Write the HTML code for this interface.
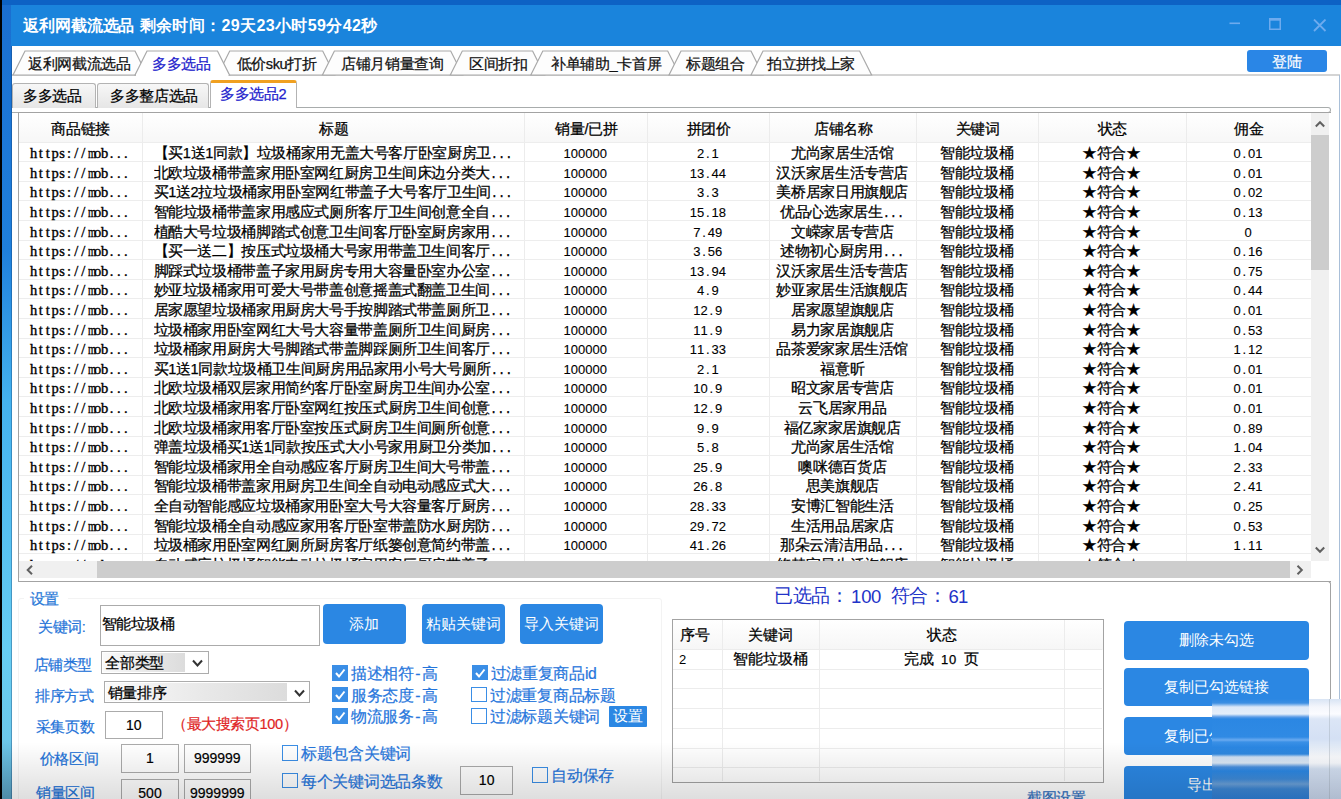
<!DOCTYPE html>
<html><head><meta charset="utf-8">
<style>
*{margin:0;padding:0;box-sizing:border-box}
html,body{width:1341px;height:799px;overflow:hidden;background:#fff;font-family:"Liberation Sans",sans-serif;color:#000}
.abs{position:absolute}
#frameL{position:absolute;left:0;top:0;width:2px;height:799px;background:#000}
#frameB{position:absolute;left:2px;top:0;width:9.5px;height:799px;background:linear-gradient(#1a6ed0 0px,#1f80dc 250px,#44b2ee 400px,#66cdf2 650px,#6cc8ea 740px,#5aa0c0 799px)}
#frameEdge{position:absolute;left:10.5px;top:46px;width:1.2px;height:753px;background:rgba(20,60,110,.35)}
#topband{position:absolute;left:2px;top:0;width:1339px;height:5px;background:#0d62c4}
#title{position:absolute;left:10.5px;top:5px;width:1331px;height:41px;background:#1a84dc}
#title .t{position:absolute;left:12.5px;top:11px;font-size:16px;font-weight:bold;color:#fff;white-space:nowrap;letter-spacing:-0.1px}
#rborder{position:absolute;left:1339px;top:75px;width:1.3px;height:724px;background:#a9bfd8}
.tabsvg{position:absolute;left:0;top:0}
.tt{position:absolute;top:54px;font-weight:500;-webkit-text-stroke:0.25px currentColor;letter-spacing:-0.37px;font-size:14.6px;white-space:nowrap;line-height:20px;color:#111}
.tt.sel{color:#2222cc}
#login{position:absolute;left:1247px;top:50px;width:80px;height:22px;background:#2a86e6;border-radius:3px;color:#fff;font-size:14.6px;text-align:center;line-height:24.5px;font-weight:500;-webkit-text-stroke:0.2px #fff}
.st{position:absolute;top:82.5px;height:25px;border:1px solid #b3b3b3;border-bottom:none;border-radius:3px 3px 0 0;background:linear-gradient(#f7f7f7,#e6e6e6);font-size:14.6px;font-weight:500;-webkit-text-stroke:0.25px currentColor;letter-spacing:-0.37px;line-height:24px;white-space:nowrap}
#st3{top:79.5px;height:28.5px;background:#fff;border-top:3px solid #f0a020;color:#2222cc;line-height:22px}
#tabline{position:absolute;left:12px;top:106.6px;width:1318.6px;height:6.4px;border:1.3px solid #a8acac;border-left:none;border-radius:0 3px 3px 0}
#tlcover{position:absolute;left:211px;top:105px;width:85px;height:2.5px;background:#fff}
#rvl{position:absolute;left:1290px;top:580.6px;width:40.6px;height:240px;border:1.4px solid #a3a3a3;border-left:none;border-bottom:none;border-radius:0 3px 0 0}
#lv{position:absolute;left:18px;top:111.5px;width:1312.5px;height:470.5px;border:1.5px solid #a3a3a3;border-right:none;background:#fff;overflow:hidden}
#lvin{position:absolute;left:-19.5px;top:-113px;width:1341px;height:799px}
.hdr{position:absolute;left:18px;top:113px;width:1293px;height:29px;background:linear-gradient(#ffffff,#f7f7f7)}
.h{position:absolute;top:119px;margin-left:1px;font-size:14.6px;letter-spacing:-0.37px;font-weight:500;-webkit-text-stroke:0.25px currentColor;text-align:center;line-height:20px;white-space:nowrap}
.vl{position:absolute;top:113px;width:1px;height:448px;background:#ececec}
.hl{position:absolute;left:18px;width:1293px;height:1px;background:#ededed}
.row{position:absolute;left:0;width:1341px;height:19.6px}
.c{position:absolute;top:1.8px;font-weight:500;-webkit-text-stroke:0.25px currentColor;font-size:14.6px;letter-spacing:-0.37px;line-height:19.6px;white-space:nowrap;overflow:hidden}
.mono{font-family:"Liberation Serif",serif;font-size:14.5px;font-weight:normal;letter-spacing:0;-webkit-text-stroke:0.35px #000}
.mono i{display:inline-block;width:7.1px;text-align:center;font-style:normal}
.mono i.m{transform:scaleX(0.72)}
.num i{display:inline-block;width:7.25px;text-align:center;font-style:normal;letter-spacing:0}
.num{font-family:"Liberation Sans",sans-serif;font-size:13px;letter-spacing:-0.1px;font-weight:normal;-webkit-text-stroke:0.1px #000}
.dots{font-family:"Liberation Mono",monospace;font-size:12px;letter-spacing:0px;font-weight:normal;-webkit-text-stroke:0.3px #000}
#vsb{position:absolute;left:1311.2px;top:113px;width:18px;height:448px;background:#f0f0f0}
#vthumb{position:absolute;left:1311.2px;top:135px;width:18px;height:135px;background:#cdcdcd}
#hsb{position:absolute;left:18px;top:561.2px;width:1293px;height:17.6px;background:#f0f0f0}
#hthumb{position:absolute;left:97px;top:561.2px;width:1193.3px;height:17.6px;background:#cdcdcd}
#corner{position:absolute;left:1311px;top:561px;width:18px;height:18px;background:#fff}
</style></head><body>
<div id="frameL"></div><div id="frameB"></div>
<div id="topband"></div>
<div id="title"><span class="t">返利网截流选品<span style="letter-spacing:0.37px;margin-left:5.4px">剩余时间：29天23小时59分42秒</span></span>
<svg class="abs" style="left:1218px;top:13px" width="20" height="20"><rect x="0.5" y="4.5" width="10.5" height="1.6" fill="#6eabee"/></svg>
<svg class="abs" style="left:1258px;top:13px" width="20" height="20"><rect x="0.75" y="0.75" width="10.5" height="10.5" fill="none" stroke="#6eabee" stroke-width="1.5"/><rect x="0.75" y="0.5" width="10.5" height="2.2" fill="#6eabee"/></svg>
<svg class="abs" style="left:1302px;top:14px" width="20" height="20"><path d="M1 0.5 L12.5 12 M12.5 0.5 L1 12" stroke="#6eabee" stroke-width="1.8"/></svg>
</div>
<div id="frameEdge"></div>
<svg class="tabsvg" width="1341" height="80" viewBox="0 0 1341 80"><line x1="12" y1="75" x2="1340" y2="75" stroke="#a9a9a9" stroke-width="1.2"/><polygon points="13,75 25,51 135,51 147,75" fill="#fdfdfd" stroke="#a9a9a9" stroke-width="1.2"/><polygon points="217.7,75 229.7,51 322.7,51 334.7,75" fill="#fdfdfd" stroke="#a9a9a9" stroke-width="1.2"/><polygon points="322.4,75 334.4,51 450.7,51 462.7,75" fill="#fdfdfd" stroke="#a9a9a9" stroke-width="1.2"/><polygon points="450.3,75 462.3,51 532.6,51 544.6,75" fill="#fdfdfd" stroke="#a9a9a9" stroke-width="1.2"/><polygon points="530.8,75 542.8,51 667.7,51 679.7,75" fill="#fdfdfd" stroke="#a9a9a9" stroke-width="1.2"/><polygon points="669,75 681,51 751,51 763,75" fill="#fdfdfd" stroke="#a9a9a9" stroke-width="1.2"/><polygon points="751,75 763,51 859.6,51 871.6,75" fill="#fdfdfd" stroke="#a9a9a9" stroke-width="1.2"/><polygon points="135,75 147,51 217.5,51 229.5,75" fill="#ffffff" stroke="#a9a9a9" stroke-width="1.2"/><rect x="136" y="74" width="92.5" height="2.5" fill="#ffffff"/></svg>
<span class="tt" style="left:28px">返利网截流选品</span><span class="tt sel" style="left:152px">多多选品</span><span class="tt" style="left:236.5px">低价sku打折</span><span class="tt" style="left:341px">店铺月销量查询</span><span class="tt" style="left:469px">区间折扣</span><span class="tt" style="left:551px">补单辅助_卡首屏</span><span class="tt" style="left:686px">标题组合</span><span class="tt" style="left:767px">拍立拼找上家</span>
<div id="login">登陆</div>
<div id="tabline"></div>
<div class="st" style="left:12px;width:83.5px;padding-left:10px">多多选品</div>
<div class="st" style="left:97px;width:112px;padding-left:12px">多多整店选品</div>
<div class="st" id="st3" style="left:210px;width:86.5px;padding-left:9px">多多选品2</div>
<div id="rborder"></div>
<div id="lv"><div id="lvin">
<div class="hdr"></div>
<div class="vl" style="left:142.5px"></div><div class="vl" style="left:524px"></div><div class="vl" style="left:647.5px"></div><div class="vl" style="left:769px"></div><div class="vl" style="left:916.5px"></div><div class="vl" style="left:1038px"></div><div class="vl" style="left:1186px"></div>
<span class="h" style="left:18px;width:124.5px">商品链接</span><span class="h" style="left:142.5px;width:381.5px">标题</span><span class="h" style="left:524px;width:123.5px">销量/已拼</span><span class="h" style="left:647.5px;width:121.5px">拼团价</span><span class="h" style="left:769px;width:147.5px">店铺名称</span><span class="h" style="left:916.5px;width:121.5px">关键词</span><span class="h" style="left:1038px;width:148px">状态</span><span class="h" style="left:1186px;width:125px">佣金</span>
<div class="hl" style="top:142.00px"></div><div class="hl" style="top:161.60px"></div><div class="hl" style="top:181.20px"></div><div class="hl" style="top:200.80px"></div><div class="hl" style="top:220.40px"></div><div class="hl" style="top:240.00px"></div><div class="hl" style="top:259.60px"></div><div class="hl" style="top:279.20px"></div><div class="hl" style="top:298.80px"></div><div class="hl" style="top:318.40px"></div><div class="hl" style="top:338.00px"></div><div class="hl" style="top:357.60px"></div><div class="hl" style="top:377.20px"></div><div class="hl" style="top:396.80px"></div><div class="hl" style="top:416.40px"></div><div class="hl" style="top:436.00px"></div><div class="hl" style="top:455.60px"></div><div class="hl" style="top:475.20px"></div><div class="hl" style="top:494.80px"></div><div class="hl" style="top:514.40px"></div><div class="hl" style="top:534.00px"></div><div class="hl" style="top:553.60px"></div>
<div class="row" style="top:143.00px"><span class="c mono" style="left:18px;width:124.5px;text-align:center"><i>h</i><i>t</i><i>t</i><i>p</i><i>s</i><i>:</i><i>/</i><i>/</i><i class="m">m</i><i>o</i><i>b</i><i>.</i><i>.</i><i>.</i></span><span class="c" style="left:154px;width:370px">【买1送1同款】垃圾桶家用无盖大号客厅卧室厨房卫<span class="dots">...</span></span><span class="c num" style="left:524px;width:123.5px;text-align:center"><i>1</i><i>0</i><i>0</i><i>0</i><i>0</i><i>0</i></span><span class="c num" style="left:647.5px;width:121.5px;text-align:center"><i>2</i><i>.</i><i>1</i></span><span class="c" style="left:769px;width:147.5px;text-align:center">尤尚家居生活馆</span><span class="c" style="left:916.5px;width:121.5px;text-align:center">智能垃圾桶</span><span class="c" style="left:1038px;width:148px;text-align:center">★符合★</span><span class="c num" style="left:1186px;width:125px;text-align:center"><i>0</i><i>.</i><i>0</i><i>1</i></span></div><div class="row" style="top:162.60px"><span class="c mono" style="left:18px;width:124.5px;text-align:center"><i>h</i><i>t</i><i>t</i><i>p</i><i>s</i><i>:</i><i>/</i><i>/</i><i class="m">m</i><i>o</i><i>b</i><i>.</i><i>.</i><i>.</i></span><span class="c" style="left:154px;width:370px">北欧垃圾桶带盖家用卧室网红厨房卫生间床边分类大<span class="dots">...</span></span><span class="c num" style="left:524px;width:123.5px;text-align:center"><i>1</i><i>0</i><i>0</i><i>0</i><i>0</i><i>0</i></span><span class="c num" style="left:647.5px;width:121.5px;text-align:center"><i>1</i><i>3</i><i>.</i><i>4</i><i>4</i></span><span class="c" style="left:769px;width:147.5px;text-align:center">汉沃家居生活专营店</span><span class="c" style="left:916.5px;width:121.5px;text-align:center">智能垃圾桶</span><span class="c" style="left:1038px;width:148px;text-align:center">★符合★</span><span class="c num" style="left:1186px;width:125px;text-align:center"><i>0</i><i>.</i><i>0</i><i>1</i></span></div><div class="row" style="top:182.20px"><span class="c mono" style="left:18px;width:124.5px;text-align:center"><i>h</i><i>t</i><i>t</i><i>p</i><i>s</i><i>:</i><i>/</i><i>/</i><i class="m">m</i><i>o</i><i>b</i><i>.</i><i>.</i><i>.</i></span><span class="c" style="left:154px;width:370px">买1送2拉垃圾桶家用卧室网红带盖子大号客厅卫生间<span class="dots">...</span></span><span class="c num" style="left:524px;width:123.5px;text-align:center"><i>1</i><i>0</i><i>0</i><i>0</i><i>0</i><i>0</i></span><span class="c num" style="left:647.5px;width:121.5px;text-align:center"><i>3</i><i>.</i><i>3</i></span><span class="c" style="left:769px;width:147.5px;text-align:center">美桥居家日用旗舰店</span><span class="c" style="left:916.5px;width:121.5px;text-align:center">智能垃圾桶</span><span class="c" style="left:1038px;width:148px;text-align:center">★符合★</span><span class="c num" style="left:1186px;width:125px;text-align:center"><i>0</i><i>.</i><i>0</i><i>2</i></span></div><div class="row" style="top:201.80px"><span class="c mono" style="left:18px;width:124.5px;text-align:center"><i>h</i><i>t</i><i>t</i><i>p</i><i>s</i><i>:</i><i>/</i><i>/</i><i class="m">m</i><i>o</i><i>b</i><i>.</i><i>.</i><i>.</i></span><span class="c" style="left:154px;width:370px">智能垃圾桶带盖家用感应式厕所客厅卫生间创意全自<span class="dots">...</span></span><span class="c num" style="left:524px;width:123.5px;text-align:center"><i>1</i><i>0</i><i>0</i><i>0</i><i>0</i><i>0</i></span><span class="c num" style="left:647.5px;width:121.5px;text-align:center"><i>1</i><i>5</i><i>.</i><i>1</i><i>8</i></span><span class="c" style="left:769px;width:147.5px;text-align:center">优品心选家居生<span class="dots">...</span></span><span class="c" style="left:916.5px;width:121.5px;text-align:center">智能垃圾桶</span><span class="c" style="left:1038px;width:148px;text-align:center">★符合★</span><span class="c num" style="left:1186px;width:125px;text-align:center"><i>0</i><i>.</i><i>1</i><i>3</i></span></div><div class="row" style="top:221.40px"><span class="c mono" style="left:18px;width:124.5px;text-align:center"><i>h</i><i>t</i><i>t</i><i>p</i><i>s</i><i>:</i><i>/</i><i>/</i><i class="m">m</i><i>o</i><i>b</i><i>.</i><i>.</i><i>.</i></span><span class="c" style="left:154px;width:370px">植酷大号垃圾桶脚踏式创意卫生间客厅卧室厨房家用<span class="dots">...</span></span><span class="c num" style="left:524px;width:123.5px;text-align:center"><i>1</i><i>0</i><i>0</i><i>0</i><i>0</i><i>0</i></span><span class="c num" style="left:647.5px;width:121.5px;text-align:center"><i>7</i><i>.</i><i>4</i><i>9</i></span><span class="c" style="left:769px;width:147.5px;text-align:center">文嵘家居专营店</span><span class="c" style="left:916.5px;width:121.5px;text-align:center">智能垃圾桶</span><span class="c" style="left:1038px;width:148px;text-align:center">★符合★</span><span class="c num" style="left:1186px;width:125px;text-align:center"><i>0</i></span></div><div class="row" style="top:241.00px"><span class="c mono" style="left:18px;width:124.5px;text-align:center"><i>h</i><i>t</i><i>t</i><i>p</i><i>s</i><i>:</i><i>/</i><i>/</i><i class="m">m</i><i>o</i><i>b</i><i>.</i><i>.</i><i>.</i></span><span class="c" style="left:154px;width:370px">【买一送二】按压式垃圾桶大号家用带盖卫生间客厅<span class="dots">...</span></span><span class="c num" style="left:524px;width:123.5px;text-align:center"><i>1</i><i>0</i><i>0</i><i>0</i><i>0</i><i>0</i></span><span class="c num" style="left:647.5px;width:121.5px;text-align:center"><i>3</i><i>.</i><i>5</i><i>6</i></span><span class="c" style="left:769px;width:147.5px;text-align:center">述物初心厨房用<span class="dots">...</span></span><span class="c" style="left:916.5px;width:121.5px;text-align:center">智能垃圾桶</span><span class="c" style="left:1038px;width:148px;text-align:center">★符合★</span><span class="c num" style="left:1186px;width:125px;text-align:center"><i>0</i><i>.</i><i>1</i><i>6</i></span></div><div class="row" style="top:260.60px"><span class="c mono" style="left:18px;width:124.5px;text-align:center"><i>h</i><i>t</i><i>t</i><i>p</i><i>s</i><i>:</i><i>/</i><i>/</i><i class="m">m</i><i>o</i><i>b</i><i>.</i><i>.</i><i>.</i></span><span class="c" style="left:154px;width:370px">脚踩式垃圾桶带盖子家用厨房专用大容量卧室办公室<span class="dots">...</span></span><span class="c num" style="left:524px;width:123.5px;text-align:center"><i>1</i><i>0</i><i>0</i><i>0</i><i>0</i><i>0</i></span><span class="c num" style="left:647.5px;width:121.5px;text-align:center"><i>1</i><i>3</i><i>.</i><i>9</i><i>4</i></span><span class="c" style="left:769px;width:147.5px;text-align:center">汉沃家居生活专营店</span><span class="c" style="left:916.5px;width:121.5px;text-align:center">智能垃圾桶</span><span class="c" style="left:1038px;width:148px;text-align:center">★符合★</span><span class="c num" style="left:1186px;width:125px;text-align:center"><i>0</i><i>.</i><i>7</i><i>5</i></span></div><div class="row" style="top:280.20px"><span class="c mono" style="left:18px;width:124.5px;text-align:center"><i>h</i><i>t</i><i>t</i><i>p</i><i>s</i><i>:</i><i>/</i><i>/</i><i class="m">m</i><i>o</i><i>b</i><i>.</i><i>.</i><i>.</i></span><span class="c" style="left:154px;width:370px">妙亚垃圾桶家用可爱大号带盖创意摇盖式翻盖卫生间<span class="dots">...</span></span><span class="c num" style="left:524px;width:123.5px;text-align:center"><i>1</i><i>0</i><i>0</i><i>0</i><i>0</i><i>0</i></span><span class="c num" style="left:647.5px;width:121.5px;text-align:center"><i>4</i><i>.</i><i>9</i></span><span class="c" style="left:769px;width:147.5px;text-align:center">妙亚家居生活旗舰店</span><span class="c" style="left:916.5px;width:121.5px;text-align:center">智能垃圾桶</span><span class="c" style="left:1038px;width:148px;text-align:center">★符合★</span><span class="c num" style="left:1186px;width:125px;text-align:center"><i>0</i><i>.</i><i>4</i><i>4</i></span></div><div class="row" style="top:299.80px"><span class="c mono" style="left:18px;width:124.5px;text-align:center"><i>h</i><i>t</i><i>t</i><i>p</i><i>s</i><i>:</i><i>/</i><i>/</i><i class="m">m</i><i>o</i><i>b</i><i>.</i><i>.</i><i>.</i></span><span class="c" style="left:154px;width:370px">居家愿望垃圾桶家用厨房大号手按脚踏式带盖厕所卫<span class="dots">...</span></span><span class="c num" style="left:524px;width:123.5px;text-align:center"><i>1</i><i>0</i><i>0</i><i>0</i><i>0</i><i>0</i></span><span class="c num" style="left:647.5px;width:121.5px;text-align:center"><i>1</i><i>2</i><i>.</i><i>9</i></span><span class="c" style="left:769px;width:147.5px;text-align:center">居家愿望旗舰店</span><span class="c" style="left:916.5px;width:121.5px;text-align:center">智能垃圾桶</span><span class="c" style="left:1038px;width:148px;text-align:center">★符合★</span><span class="c num" style="left:1186px;width:125px;text-align:center"><i>0</i><i>.</i><i>0</i><i>1</i></span></div><div class="row" style="top:319.40px"><span class="c mono" style="left:18px;width:124.5px;text-align:center"><i>h</i><i>t</i><i>t</i><i>p</i><i>s</i><i>:</i><i>/</i><i>/</i><i class="m">m</i><i>o</i><i>b</i><i>.</i><i>.</i><i>.</i></span><span class="c" style="left:154px;width:370px">垃圾桶家用卧室网红大号大容量带盖厕所卫生间厨房<span class="dots">...</span></span><span class="c num" style="left:524px;width:123.5px;text-align:center"><i>1</i><i>0</i><i>0</i><i>0</i><i>0</i><i>0</i></span><span class="c num" style="left:647.5px;width:121.5px;text-align:center"><i>1</i><i>1</i><i>.</i><i>9</i></span><span class="c" style="left:769px;width:147.5px;text-align:center">易力家居旗舰店</span><span class="c" style="left:916.5px;width:121.5px;text-align:center">智能垃圾桶</span><span class="c" style="left:1038px;width:148px;text-align:center">★符合★</span><span class="c num" style="left:1186px;width:125px;text-align:center"><i>0</i><i>.</i><i>5</i><i>3</i></span></div><div class="row" style="top:339.00px"><span class="c mono" style="left:18px;width:124.5px;text-align:center"><i>h</i><i>t</i><i>t</i><i>p</i><i>s</i><i>:</i><i>/</i><i>/</i><i class="m">m</i><i>o</i><i>b</i><i>.</i><i>.</i><i>.</i></span><span class="c" style="left:154px;width:370px">垃圾桶家用厨房大号脚踏式带盖脚踩厕所卫生间客厅<span class="dots">...</span></span><span class="c num" style="left:524px;width:123.5px;text-align:center"><i>1</i><i>0</i><i>0</i><i>0</i><i>0</i><i>0</i></span><span class="c num" style="left:647.5px;width:121.5px;text-align:center"><i>1</i><i>1</i><i>.</i><i>3</i><i>3</i></span><span class="c" style="left:769px;width:147.5px;text-align:center">品茶爱家家居生活馆</span><span class="c" style="left:916.5px;width:121.5px;text-align:center">智能垃圾桶</span><span class="c" style="left:1038px;width:148px;text-align:center">★符合★</span><span class="c num" style="left:1186px;width:125px;text-align:center"><i>1</i><i>.</i><i>1</i><i>2</i></span></div><div class="row" style="top:358.60px"><span class="c mono" style="left:18px;width:124.5px;text-align:center"><i>h</i><i>t</i><i>t</i><i>p</i><i>s</i><i>:</i><i>/</i><i>/</i><i class="m">m</i><i>o</i><i>b</i><i>.</i><i>.</i><i>.</i></span><span class="c" style="left:154px;width:370px">买1送1同款垃圾桶卫生间厨房用品家用小号大号厕所<span class="dots">...</span></span><span class="c num" style="left:524px;width:123.5px;text-align:center"><i>1</i><i>0</i><i>0</i><i>0</i><i>0</i><i>0</i></span><span class="c num" style="left:647.5px;width:121.5px;text-align:center"><i>2</i><i>.</i><i>1</i></span><span class="c" style="left:769px;width:147.5px;text-align:center">福意昕</span><span class="c" style="left:916.5px;width:121.5px;text-align:center">智能垃圾桶</span><span class="c" style="left:1038px;width:148px;text-align:center">★符合★</span><span class="c num" style="left:1186px;width:125px;text-align:center"><i>0</i><i>.</i><i>0</i><i>1</i></span></div><div class="row" style="top:378.20px"><span class="c mono" style="left:18px;width:124.5px;text-align:center"><i>h</i><i>t</i><i>t</i><i>p</i><i>s</i><i>:</i><i>/</i><i>/</i><i class="m">m</i><i>o</i><i>b</i><i>.</i><i>.</i><i>.</i></span><span class="c" style="left:154px;width:370px">北欧垃圾桶双层家用简约客厅卧室厨房卫生间办公室<span class="dots">...</span></span><span class="c num" style="left:524px;width:123.5px;text-align:center"><i>1</i><i>0</i><i>0</i><i>0</i><i>0</i><i>0</i></span><span class="c num" style="left:647.5px;width:121.5px;text-align:center"><i>1</i><i>0</i><i>.</i><i>9</i></span><span class="c" style="left:769px;width:147.5px;text-align:center">昭文家居专营店</span><span class="c" style="left:916.5px;width:121.5px;text-align:center">智能垃圾桶</span><span class="c" style="left:1038px;width:148px;text-align:center">★符合★</span><span class="c num" style="left:1186px;width:125px;text-align:center"><i>0</i><i>.</i><i>0</i><i>1</i></span></div><div class="row" style="top:397.80px"><span class="c mono" style="left:18px;width:124.5px;text-align:center"><i>h</i><i>t</i><i>t</i><i>p</i><i>s</i><i>:</i><i>/</i><i>/</i><i class="m">m</i><i>o</i><i>b</i><i>.</i><i>.</i><i>.</i></span><span class="c" style="left:154px;width:370px">北欧垃圾桶家用客厅卧室网红按压式厨房卫生间创意<span class="dots">...</span></span><span class="c num" style="left:524px;width:123.5px;text-align:center"><i>1</i><i>0</i><i>0</i><i>0</i><i>0</i><i>0</i></span><span class="c num" style="left:647.5px;width:121.5px;text-align:center"><i>1</i><i>2</i><i>.</i><i>9</i></span><span class="c" style="left:769px;width:147.5px;text-align:center">云飞居家用品</span><span class="c" style="left:916.5px;width:121.5px;text-align:center">智能垃圾桶</span><span class="c" style="left:1038px;width:148px;text-align:center">★符合★</span><span class="c num" style="left:1186px;width:125px;text-align:center"><i>0</i><i>.</i><i>0</i><i>1</i></span></div><div class="row" style="top:417.40px"><span class="c mono" style="left:18px;width:124.5px;text-align:center"><i>h</i><i>t</i><i>t</i><i>p</i><i>s</i><i>:</i><i>/</i><i>/</i><i class="m">m</i><i>o</i><i>b</i><i>.</i><i>.</i><i>.</i></span><span class="c" style="left:154px;width:370px">北欧垃圾桶家用客厅卧室按压式厨房卫生间厕所创意<span class="dots">...</span></span><span class="c num" style="left:524px;width:123.5px;text-align:center"><i>1</i><i>0</i><i>0</i><i>0</i><i>0</i><i>0</i></span><span class="c num" style="left:647.5px;width:121.5px;text-align:center"><i>9</i><i>.</i><i>9</i></span><span class="c" style="left:769px;width:147.5px;text-align:center">福亿家家居旗舰店</span><span class="c" style="left:916.5px;width:121.5px;text-align:center">智能垃圾桶</span><span class="c" style="left:1038px;width:148px;text-align:center">★符合★</span><span class="c num" style="left:1186px;width:125px;text-align:center"><i>0</i><i>.</i><i>8</i><i>9</i></span></div><div class="row" style="top:437.00px"><span class="c mono" style="left:18px;width:124.5px;text-align:center"><i>h</i><i>t</i><i>t</i><i>p</i><i>s</i><i>:</i><i>/</i><i>/</i><i class="m">m</i><i>o</i><i>b</i><i>.</i><i>.</i><i>.</i></span><span class="c" style="left:154px;width:370px">弹盖垃圾桶买1送1同款按压式大小号家用厨卫分类加<span class="dots">...</span></span><span class="c num" style="left:524px;width:123.5px;text-align:center"><i>1</i><i>0</i><i>0</i><i>0</i><i>0</i><i>0</i></span><span class="c num" style="left:647.5px;width:121.5px;text-align:center"><i>5</i><i>.</i><i>8</i></span><span class="c" style="left:769px;width:147.5px;text-align:center">尤尚家居生活馆</span><span class="c" style="left:916.5px;width:121.5px;text-align:center">智能垃圾桶</span><span class="c" style="left:1038px;width:148px;text-align:center">★符合★</span><span class="c num" style="left:1186px;width:125px;text-align:center"><i>1</i><i>.</i><i>0</i><i>4</i></span></div><div class="row" style="top:456.60px"><span class="c mono" style="left:18px;width:124.5px;text-align:center"><i>h</i><i>t</i><i>t</i><i>p</i><i>s</i><i>:</i><i>/</i><i>/</i><i class="m">m</i><i>o</i><i>b</i><i>.</i><i>.</i><i>.</i></span><span class="c" style="left:154px;width:370px">智能垃圾桶家用全自动感应客厅厨房卫生间大号带盖<span class="dots">...</span></span><span class="c num" style="left:524px;width:123.5px;text-align:center"><i>1</i><i>0</i><i>0</i><i>0</i><i>0</i><i>0</i></span><span class="c num" style="left:647.5px;width:121.5px;text-align:center"><i>2</i><i>5</i><i>.</i><i>9</i></span><span class="c" style="left:769px;width:147.5px;text-align:center">噢咪德百货店</span><span class="c" style="left:916.5px;width:121.5px;text-align:center">智能垃圾桶</span><span class="c" style="left:1038px;width:148px;text-align:center">★符合★</span><span class="c num" style="left:1186px;width:125px;text-align:center"><i>2</i><i>.</i><i>3</i><i>3</i></span></div><div class="row" style="top:476.20px"><span class="c mono" style="left:18px;width:124.5px;text-align:center"><i>h</i><i>t</i><i>t</i><i>p</i><i>s</i><i>:</i><i>/</i><i>/</i><i class="m">m</i><i>o</i><i>b</i><i>.</i><i>.</i><i>.</i></span><span class="c" style="left:154px;width:370px">智能垃圾桶带盖家用厨房卫生间全自动电动感应式大<span class="dots">...</span></span><span class="c num" style="left:524px;width:123.5px;text-align:center"><i>1</i><i>0</i><i>0</i><i>0</i><i>0</i><i>0</i></span><span class="c num" style="left:647.5px;width:121.5px;text-align:center"><i>2</i><i>6</i><i>.</i><i>8</i></span><span class="c" style="left:769px;width:147.5px;text-align:center">思美旗舰店</span><span class="c" style="left:916.5px;width:121.5px;text-align:center">智能垃圾桶</span><span class="c" style="left:1038px;width:148px;text-align:center">★符合★</span><span class="c num" style="left:1186px;width:125px;text-align:center"><i>2</i><i>.</i><i>4</i><i>1</i></span></div><div class="row" style="top:495.80px"><span class="c mono" style="left:18px;width:124.5px;text-align:center"><i>h</i><i>t</i><i>t</i><i>p</i><i>s</i><i>:</i><i>/</i><i>/</i><i class="m">m</i><i>o</i><i>b</i><i>.</i><i>.</i><i>.</i></span><span class="c" style="left:154px;width:370px">全自动智能感应垃圾桶家用卧室大号大容量客厅厨房<span class="dots">...</span></span><span class="c num" style="left:524px;width:123.5px;text-align:center"><i>1</i><i>0</i><i>0</i><i>0</i><i>0</i><i>0</i></span><span class="c num" style="left:647.5px;width:121.5px;text-align:center"><i>2</i><i>8</i><i>.</i><i>3</i><i>3</i></span><span class="c" style="left:769px;width:147.5px;text-align:center">安博汇智能生活</span><span class="c" style="left:916.5px;width:121.5px;text-align:center">智能垃圾桶</span><span class="c" style="left:1038px;width:148px;text-align:center">★符合★</span><span class="c num" style="left:1186px;width:125px;text-align:center"><i>0</i><i>.</i><i>2</i><i>5</i></span></div><div class="row" style="top:515.40px"><span class="c mono" style="left:18px;width:124.5px;text-align:center"><i>h</i><i>t</i><i>t</i><i>p</i><i>s</i><i>:</i><i>/</i><i>/</i><i class="m">m</i><i>o</i><i>b</i><i>.</i><i>.</i><i>.</i></span><span class="c" style="left:154px;width:370px">智能垃圾桶全自动感应家用客厅卧室带盖防水厨房防<span class="dots">...</span></span><span class="c num" style="left:524px;width:123.5px;text-align:center"><i>1</i><i>0</i><i>0</i><i>0</i><i>0</i><i>0</i></span><span class="c num" style="left:647.5px;width:121.5px;text-align:center"><i>2</i><i>9</i><i>.</i><i>7</i><i>2</i></span><span class="c" style="left:769px;width:147.5px;text-align:center">生活用品居家店</span><span class="c" style="left:916.5px;width:121.5px;text-align:center">智能垃圾桶</span><span class="c" style="left:1038px;width:148px;text-align:center">★符合★</span><span class="c num" style="left:1186px;width:125px;text-align:center"><i>0</i><i>.</i><i>5</i><i>3</i></span></div><div class="row" style="top:535.00px"><span class="c mono" style="left:18px;width:124.5px;text-align:center"><i>h</i><i>t</i><i>t</i><i>p</i><i>s</i><i>:</i><i>/</i><i>/</i><i class="m">m</i><i>o</i><i>b</i><i>.</i><i>.</i><i>.</i></span><span class="c" style="left:154px;width:370px">垃圾桶家用卧室网红厕所厨房客厅纸篓创意简约带盖<span class="dots">...</span></span><span class="c num" style="left:524px;width:123.5px;text-align:center"><i>1</i><i>0</i><i>0</i><i>0</i><i>0</i><i>0</i></span><span class="c num" style="left:647.5px;width:121.5px;text-align:center"><i>4</i><i>1</i><i>.</i><i>2</i><i>6</i></span><span class="c" style="left:769px;width:147.5px;text-align:center">那朵云清洁用品<span class="dots">...</span></span><span class="c" style="left:916.5px;width:121.5px;text-align:center">智能垃圾桶</span><span class="c" style="left:1038px;width:148px;text-align:center">★符合★</span><span class="c num" style="left:1186px;width:125px;text-align:center"><i>1</i><i>.</i><i>1</i><i>1</i></span></div><div class="row" style="top:554.60px"><span class="c mono" style="left:18px;width:124.5px;text-align:center"><i>h</i><i>t</i><i>t</i><i>p</i><i>s</i><i>:</i><i>/</i><i>/</i><i class="m">m</i><i>o</i><i>b</i><i>.</i><i>.</i><i>.</i></span><span class="c" style="left:154px;width:370px">自动感应垃圾桶智能电动垃圾桶家用客厅厨房带盖子<span class="dots">...</span></span><span class="c num" style="left:524px;width:123.5px;text-align:center"><i>1</i><i>0</i><i>0</i><i>0</i><i>0</i><i>0</i></span><span class="c num" style="left:647.5px;width:121.5px;text-align:center"><i>5</i><i>3</i><i>.</i><i>2</i><i>1</i></span><span class="c" style="left:769px;width:147.5px;text-align:center">悠赫家居生活旗舰店</span><span class="c" style="left:916.5px;width:121.5px;text-align:center">智能垃圾桶</span><span class="c" style="left:1038px;width:148px;text-align:center">★符合★</span><span class="c num" style="left:1186px;width:125px;text-align:center"><i>1</i><i>.</i><i>0</i><i>4</i></span></div>
<div id="vsb"></div><div id="vthumb"></div>
<div id="hsb"></div><div id="hthumb"></div><div id="corner"></div>
<svg class="abs" style="left:1311px;top:113px" width="18" height="448"><path d="M4.8 13.5 L9 9.2 L13.2 13.5" fill="none" stroke="#606060" stroke-width="2"/><path d="M4.8 434.5 L9 438.8 L13.2 434.5" fill="none" stroke="#606060" stroke-width="2"/></svg>
<svg class="abs" style="left:18px;top:561px" width="1293" height="18"><path d="M14 4.8 L9.7 9 L14 13.2" fill="none" stroke="#606060" stroke-width="2"/><path d="M1279.5 4.8 L1283.8 9 L1279.5 13.2" fill="none" stroke="#606060" stroke-width="2"/></svg>
</div></div>
<div id="rvl"></div>
<style>
.lbl{position:absolute;font-size:14.6px;line-height:16px;margin-top:1.2px;color:#2272d8;white-space:nowrap;letter-spacing:-0.4px;font-weight:500;-webkit-text-stroke:0.2px currentColor}
.inp{position:absolute;border:1px solid #ababab;background:#fff;font-size:14.6px;white-space:nowrap;-webkit-text-stroke:0.2px #000}
.btn{position:absolute;background:#2b87e3;border-radius:4px;color:#fff;font-size:14.6px;text-align:center;white-space:nowrap}
.cb{position:absolute;width:15.5px;height:15.5px;border:1.6px solid #3a8ee6;background:#fff}
.cb.on{background:#3a8ee6}
.cb.on svg{position:absolute;left:1px;top:1px}
.cbt{position:absolute;font-size:15.7px;line-height:16px;margin-top:1px;color:#2676dc;white-space:nowrap;letter-spacing:-0.3px;font-weight:500;-webkit-text-stroke:0.2px currentColor}
.combo{position:absolute;border:1px solid #acacac;background:#fff}
.combo .hl2{position:absolute;left:1px;top:1.5px;bottom:1.5px;background:linear-gradient(90deg,#fafafa 0%,#e8e8e8 55%,#dcdcdc 100%)}
.combo .tx{position:absolute;left:3px;top:2px;font-size:14.6px;line-height:18px;color:#000;font-weight:500;-webkit-text-stroke:0.25px #000;letter-spacing:-0.37px}
.chev{position:absolute}
.sgrid{position:absolute;background:#ececec}
</style>
<div class="abs" style="left:17.5px;top:598px;width:644px;height:220px;border:1px solid #f3f3f3;border-radius:3px"></div>
<div class="abs" style="left:24px;top:590px;width:44px;height:18px;background:#fff"></div>
<div class="lbl" style="left:29.5px;top:589px;font-size:15px;line-height:18px;color:#2a7ad8">设置</div>
<div class="lbl" style="left:38px;top:618px">关键词:</div>
<div class="inp" style="left:100px;top:604.5px;width:220px;height:41.5px"></div>
<div class="abs" style="left:101.5px;top:615px;font-size:14.6px;line-height:18px;white-space:nowrap;font-weight:500;-webkit-text-stroke:0.25px #000;letter-spacing:-0.37px">智能垃圾桶</div>
<div class="btn" style="left:322.6px;top:604px;width:83px;height:40px;line-height:40px">添加</div>
<div class="btn" style="left:421.8px;top:604px;width:83px;height:40px;line-height:40px">粘贴关键词</div>
<div class="btn" style="left:520px;top:604px;width:83px;height:40px;line-height:40px">导入关键词</div>

<div class="lbl" style="left:33.5px;top:656px">店铺类型</div>
<div class="combo" style="left:101.3px;top:650.6px;width:107.3px;height:23.5px"><div class="hl2" style="width:82px"></div><div class="tx">全部类型</div>
<svg class="chev" style="left:90px;top:7px" width="12" height="9"><path d="M1 1.5 L5.5 6.5 L10 1.5" fill="none" stroke="#333" stroke-width="2"/></svg></div>
<div class="lbl" style="left:35px;top:686.5px">排序方式</div>
<div class="combo" style="left:103.8px;top:680.7px;width:206.2px;height:22.7px"><div class="hl2" style="width:181px"></div><div class="tx">销量排序</div>
<svg class="chev" style="left:189px;top:7px" width="12" height="9"><path d="M1 1.5 L5.5 6.5 L10 1.5" fill="none" stroke="#333" stroke-width="2"/></svg></div>
<div class="lbl" style="left:35.8px;top:717.5px">采集页数</div>
<div class="inp" style="left:105px;top:711px;width:57.7px;height:28.2px;text-align:center;line-height:26px;font-size:14px">10</div>
<div class="lbl" style="left:172px;top:715px;color:#e02424">（最大搜索页100）</div>
<div class="lbl" style="left:39.8px;top:750px">价格区间</div>
<div class="inp" style="left:121px;top:744px;width:58px;height:28.6px;text-align:center;line-height:26px;font-size:14px">1</div>
<div class="inp" style="left:183.5px;top:744px;width:67.5px;height:28.6px;text-align:center;line-height:26px;font-size:14px">999999</div>
<div class="lbl" style="left:36px;top:784px">销量区间</div>
<div class="inp" style="left:121px;top:778.6px;width:58px;height:28.6px;text-align:center;line-height:26px;font-size:14px">500</div>
<div class="inp" style="left:183.5px;top:778.6px;width:67.5px;height:28.6px;text-align:center;line-height:26px;font-size:14px">9999999</div>

<div class="cb on" style="left:332.4px;top:665px"><svg width="12" height="12"><path d="M2 6 L5 9.5 L10.5 2.5" fill="none" stroke="#fff" stroke-width="2"/></svg></div>
<div class="cbt" style="left:351px;top:665px">描述相符<span style="display:inline-block;width:8px;text-align:center">-</span>高</div>
<div class="cb on" style="left:332.4px;top:686.5px"><svg width="12" height="12"><path d="M2 6 L5 9.5 L10.5 2.5" fill="none" stroke="#fff" stroke-width="2"/></svg></div>
<div class="cbt" style="left:351px;top:686.5px">服务态度<span style="display:inline-block;width:8px;text-align:center">-</span>高</div>
<div class="cb on" style="left:332.4px;top:708px"><svg width="12" height="12"><path d="M2 6 L5 9.5 L10.5 2.5" fill="none" stroke="#fff" stroke-width="2"/></svg></div>
<div class="cbt" style="left:351px;top:708px">物流服务<span style="display:inline-block;width:8px;text-align:center">-</span>高</div>
<div class="cb on" style="left:472.3px;top:664.5px"><svg width="12" height="12"><path d="M2 6 L5 9.5 L10.5 2.5" fill="none" stroke="#fff" stroke-width="2"/></svg></div>
<div class="cbt" style="left:490.7px;top:664.5px">过滤重复商品id</div>
<div class="cb" style="left:471.4px;top:686.5px"></div>
<div class="cbt" style="left:490px;top:686.5px">过滤重复商品标题</div>
<div class="cb" style="left:471.4px;top:708px"></div>
<div class="cbt" style="left:490px;top:708px">过滤标题关键词</div>
<div class="btn" style="left:609px;top:705.8px;width:37.6px;height:21px;line-height:21px;border-radius:1px;font-size:14.6px">设置</div>
<div class="cb" style="left:282.3px;top:745px"></div>
<div class="cbt" style="left:301px;top:745px">标题包含关键词</div>
<div class="cb" style="left:282.3px;top:772.8px"></div>
<div class="cbt" style="left:301px;top:772.8px">每个关键词选品条数</div>
<div class="inp" style="left:460px;top:765.6px;width:53.3px;height:29px;text-align:center;line-height:27px;font-size:14px">10</div>
<div class="cb" style="left:532.3px;top:767.3px"></div>
<div class="cbt" style="left:551.3px;top:767px">自动保存</div>

<!-- right panel -->
<div class="abs" style="left:774px;top:586px;font-size:18.5px;line-height:20px;color:#2233c8;white-space:nowrap;letter-spacing:-0.5px;font-weight:500">已选品：</div>
<div class="abs selc" style="left:851px;top:586.5px">1<i>0</i><i>0</i></div>
<div class="abs" style="left:890.5px;top:586px;font-size:18.5px;line-height:20px;color:#2233c8;white-space:nowrap;letter-spacing:-0.2px;font-weight:500">符合：</div>
<div class="abs selc" style="left:948.5px;top:586.5px"><i>6</i><i>1</i></div>
<style>.selc{font-family:"Liberation Sans",sans-serif;font-size:18.5px;line-height:20px;color:#2233c8;white-space:nowrap}.selc i{font-style:normal;display:inline-block;width:9.6px;text-align:center}</style>
<div class="abs" style="left:671.6px;top:618.5px;width:432px;height:164px;border:1.5px solid #a3a3a3;background:#fff;overflow:hidden">
 <div class="abs" style="left:0;top:0;width:430px;height:30px;background:linear-gradient(#fff,#f6f6f6)"></div>
</div>
<div class="sgrid" style="left:721.7px;top:620px;width:1px;height:161px"></div><div class="sgrid" style="left:819.3px;top:620px;width:1px;height:161px"></div><div class="sgrid" style="left:1064.3px;top:620px;width:1px;height:161px"></div><div class="sgrid" style="left:673px;top:649px;width:429px;height:1px"></div><div class="sgrid" style="left:673px;top:668.7px;width:429px;height:1px"></div><div class="sgrid" style="left:673px;top:688.3px;width:429px;height:1px"></div><div class="sgrid" style="left:673px;top:707.8px;width:429px;height:1px"></div><div class="sgrid" style="left:673px;top:727.7px;width:429px;height:1px"></div><div class="sgrid" style="left:673px;top:747.6px;width:429px;height:1px"></div><div class="sgrid" style="left:673px;top:767.2px;width:429px;height:1px"></div>
<div class="abs" style="left:679.5px;top:626px;font-size:14.6px;line-height:18px;white-space:nowrap;font-weight:500;-webkit-text-stroke:0.25px #000">序号</div>
<div class="abs" style="left:722px;top:626px;width:97px;text-align:center;font-size:14.6px;line-height:18px;white-space:nowrap;font-weight:500;-webkit-text-stroke:0.25px #000">关键词</div>
<div class="abs" style="left:819px;top:626px;width:245px;text-align:center;font-size:14.6px;line-height:18px;white-space:nowrap;font-weight:500;-webkit-text-stroke:0.25px #000">状态</div>
<div class="abs" style="left:679px;top:651px;font-family:'Liberation Sans',sans-serif;font-size:13px;line-height:18px">2</div>
<div class="abs" style="left:722px;top:650px;width:97px;text-align:center;font-size:14.6px;line-height:18px;white-space:nowrap;font-weight:500;-webkit-text-stroke:0.25px #000">智能垃圾桶</div>
<div class="abs" style="left:819px;top:650px;width:245px;text-align:center;font-size:14.6px;line-height:18px;white-space:nowrap;font-weight:500;-webkit-text-stroke:0.25px #000;word-spacing:3px">完成 <span style="font-family:'Liberation Sans',sans-serif;font-size:13px;letter-spacing:0.8px">10</span> 页</div>

<div class="btn" style="left:1124.4px;top:621.2px;width:184.8px;height:38.6px;line-height:38px">删除未勾选</div>
<div class="btn" style="left:1124.4px;top:667.7px;width:184.8px;height:38.1px;line-height:38px">复制已勾选链接</div>
<div class="btn" style="left:1124.4px;top:716.5px;width:184.8px;height:38.4px;line-height:38px">复制已勾选标题</div>
<div class="btn" style="left:1124.4px;top:765.6px;width:184.8px;height:38.4px;line-height:38px">导出表格</div>
<div class="lbl" style="left:1027px;top:789px;color:#2f6fc0">截图设置</div>

<!-- overlay streaks -->
<div class="abs" style="left:1212px;top:699px;width:97px;height:100px;background:linear-gradient(to bottom,#2b87e3 0px,#3d8fe2 4px,#dde9f8 8px,#e4eefa 15px,#5a9be6 18px,#2b87e3 20px,#2f8ae4 38px,#6aaaf0 41px,#3a90e6 43px,#2b87e3 48px,#2f88e0 55px,#cfe0f4 58px,#dce8f6 64px,#4a90e0 68px,#2b87e3 72px,#3e8ad8 80px,#6aa0d8 85px,#3c86d4 90px,#2f80d8 100px)"></div>
<div class="abs" style="left:1309px;top:699px;width:32px;height:100px;background:linear-gradient(to bottom,#d8e4f4 0px,#f4f6fc 8px,#fbfcff 15px,#dce6f6 20px,#d4e0f4 40px,#e4ecf8 48px,#fafbfe 58px,#f8fafe 64px,#d4e0f2 70px,#cad8ee 100px)"></div>
<div class="abs" style="left:1329px;top:699px;width:1.2px;height:100px;background:rgba(150,160,170,.35)"></div>
<div class="abs" style="left:0;top:742px;width:1341px;height:57px;background:linear-gradient(rgba(0,0,0,0),rgba(0,0,0,.13));pointer-events:none"></div>

</body></html>
